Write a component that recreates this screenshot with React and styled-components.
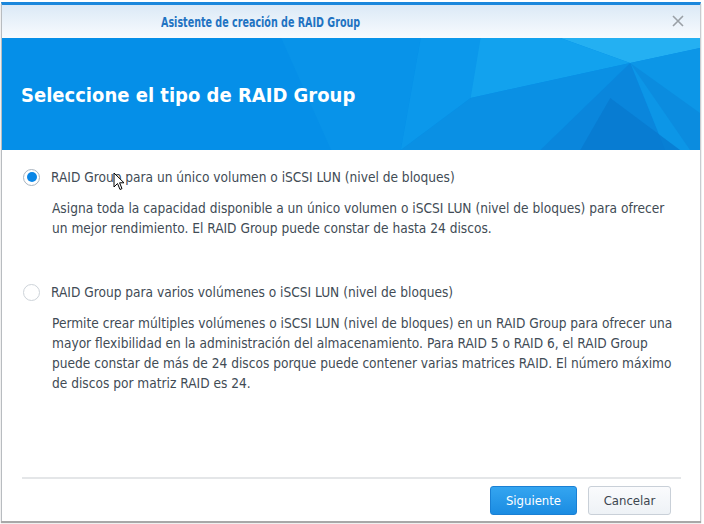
import React, { useState } from "react";
import styled, { createGlobalStyle } from "styled-components";

const GlobalStyle = createGlobalStyle`
    html, body {
        margin: 0;
        padding: 0;
        background: #ffffff;
    }
    body {
        font-family: "DejaVu Sans Condensed", "DejaVu Sans", sans-serif;
    }
`;

const options = [
    {
        id: "single",
        label: "RAID Group para un único volumen o iSCSI LUN (nivel de bloques)",
        desc: "Asigna toda la capacidad disponible a un único volumen o iSCSI LUN (nivel de bloques) para ofrecer un mejor rendimiento. El RAID Group puede constar de hasta 24 discos.",
    },
    {
        id: "multi",
        label: "RAID Group para varios volúmenes o iSCSI LUN (nivel de bloques)",
        desc: "Permite crear múltiples volúmenes o iSCSI LUN (nivel de bloques) en un RAID Group para ofrecer una mayor flexibilidad en la administración del almacenamiento. Para RAID 5 o RAID 6, el RAID Group puede constar de más de 24 discos porque puede contener varias matrices RAID. El número máximo de discos por matriz RAID es 24.",
    },
];

const App = () => {
    const [selected, setSelected] = useState("single");

    return (
        <>
            <GlobalStyle />
            <Page>
                <Window>
                    <TitleBar>
                        <Title>Asistente de creación de RAID Group</Title>
                        <CloseButton aria-label="Cerrar">
                            <svg width="12" height="12" viewBox="0 0 12 12">
                                <path d="M1 1 L11 11 M11 1 L1 11" stroke="#9aa0a6" strokeWidth="1.6" fill="none" />
                            </svg>
                        </CloseButton>
                    </TitleBar>

                    <Banner>
                        <BannerArt viewBox="0 0 700 112" preserveAspectRatio="none">
                            <polygon points="280,0 420,0 400,112 330,112" fill="#0893e9" />
                            <polygon points="420,0 560,0 470,60 400,112" fill="#0b98eb" />
                            <polygon points="560,0 700,0 700,10 630,25" fill="#24b0f2" />
                            <polygon points="480,0 560,0 630,25 470,60" fill="#12a2ee" />
                            <polygon points="630,25 700,10 700,112 665,112" fill="#0c96e7" />
                            <polygon points="470,60 630,25 540,112 400,112" fill="#0a90e4" />
                            <polygon points="630,25 665,112 540,112" fill="#0a86dc" />
                            <polygon points="610,60 680,112 580,112" fill="#0879d0" opacity="0.8" />
                            <polygon points="630,25 700,75 700,112 690,112" fill="#0b8cdf" />
                        </BannerArt>
                        <BannerTitle>Seleccione el tipo de RAID Group</BannerTitle>
                    </Banner>

                    <Body>
                        {options.map((o) => (
                            <Option key={o.id}>
                                <OptionRow onClick={() => setSelected(o.id)}>
                                    <Radio $checked={selected === o.id} />
                                    <Label>{o.label}</Label>
                                </OptionRow>
                                <Desc>{o.desc}</Desc>
                            </Option>
                        ))}
                        <Cursor viewBox="0 0 12 19" width="12" height="19">
                            <path d="M1 1 L1 15 L4.5 11.5 L7 17.5 L9 16.6 L6.6 10.8 L11 10.8 Z" fill="#ffffff" stroke="#000000" strokeWidth="1" strokeLinejoin="round" />
                        </Cursor>
                    </Body>

                    <Footer>
                        <Button $primary>Siguiente</Button>
                        <Button>Cancelar</Button>
                    </Footer>
                </Window>
            </Page>
        </>
    );
};

const Page = styled.div`
    width: 704px;
    height: 524px;
    padding: 2px 3px 0 1px;
    box-sizing: border-box;
    background: #ffffff;
`;

const Window = styled.div`
    width: 700px;
    height: 519px;
    box-sizing: border-box;
    border-top: 3px solid #1b87dc;
    border-left: 1px solid #b8bcc0;
    border-right: 1px solid #c8ccd0;
    background: #ffffff;
    box-shadow: 0 2px 1px #a8a8a8;
    display: flex;
    flex-direction: column;
`;

const TitleBar = styled.div`
    height: 33px;
    display: flex;
    align-items: center;
    padding-left: 159px;
    position: relative;
    background: linear-gradient(#dbe9f6, #f8fbfe);
`;

const Title = styled.div`
    font-weight: bold;
    font-size: 14px;
    color: #1f73c2;
    transform: scaleX(0.76);
    transform-origin: left center;
    white-space: nowrap;
`;

const CloseButton = styled.div`
    position: absolute;
    right: 16px;
    top: 10px;
    width: 12px;
    height: 12px;
    display: flex;
`;

const Banner = styled.div`
    height: 112px;
    position: relative;
    overflow: hidden;
    background: #058fe8;
    display: flex;
    align-items: center;
    padding-left: 19px;
`;

const BannerArt = styled.svg`
    position: absolute;
    inset: 0;
    width: 100%;
    height: 100%;
`;

const BannerTitle = styled.h1`
    position: relative;
    margin: 2px 0 0;
    font-weight: bold;
    font-size: 20px;
    color: #ffffff;
`;

const Body = styled.div`
    flex: 1;
    position: relative;
    padding: 17px 0 0 1px;
    margin: 0 19px 0 20px;
    border-bottom: 2px solid #e4e6e8;
    display: flex;
    flex-direction: column;
    gap: 44px;
`;

const Option = styled.div`
    display: flex;
    flex-direction: column;
`;

const OptionRow = styled.div`
    display: flex;
    align-items: center;
    gap: 11px;
    height: 20px;
    cursor: pointer;
`;

const Radio = styled.span`
    width: 17px;
    height: 17px;
    box-sizing: border-box;
    border-radius: 50%;
    border: 1px solid ${(p) => (p.$checked ? "#a9b4bf" : "#cdd3d9")};
    background: #ffffff;
    display: flex;
    align-items: center;
    justify-content: center;
    flex-shrink: 0;

    &::after {
        content: "";
        display: ${(p) => (p.$checked ? "block" : "none")};
        width: 10px;
        height: 10px;
        border-radius: 50%;
        background: #0a86e6;
    }
`;

const Label = styled.span`
    font-size: 13.6px;
    color: #414b55;
`;

const Desc = styled.p`
    margin: 11px 0 0 29px;
    padding-right: 6px;
    font-size: 13.6px;
    line-height: 20px;
    color: #414b55;
`;

const Cursor = styled.svg`
    position: absolute;
    left: 91px;
    top: 22px;
`;

const Footer = styled.div`
    height: 42px;
    display: flex;
    justify-content: flex-end;
    align-items: center;
    gap: 11px;
    padding-right: 29px;
`;

const Button = styled.button`
    height: 29px;
    min-width: ${(p) => (p.$primary ? "87px" : "83px")};
    box-sizing: border-box;
    border-radius: 3px;
    font-family: "DejaVu Sans Condensed", "DejaVu Sans", sans-serif;
    font-size: 13px;
    cursor: pointer;
    border: 1px solid ${(p) => (p.$primary ? "#1a80d4" : "#c9d0d8")};
    background: ${(p) => (p.$primary ? "linear-gradient(#34a5f0, #1b8ce2)" : "linear-gradient(#fafbfd, #eef2f6)")};
    color: ${(p) => (p.$primary ? "#ffffff" : "#3d4650")};
`;

export default App;
